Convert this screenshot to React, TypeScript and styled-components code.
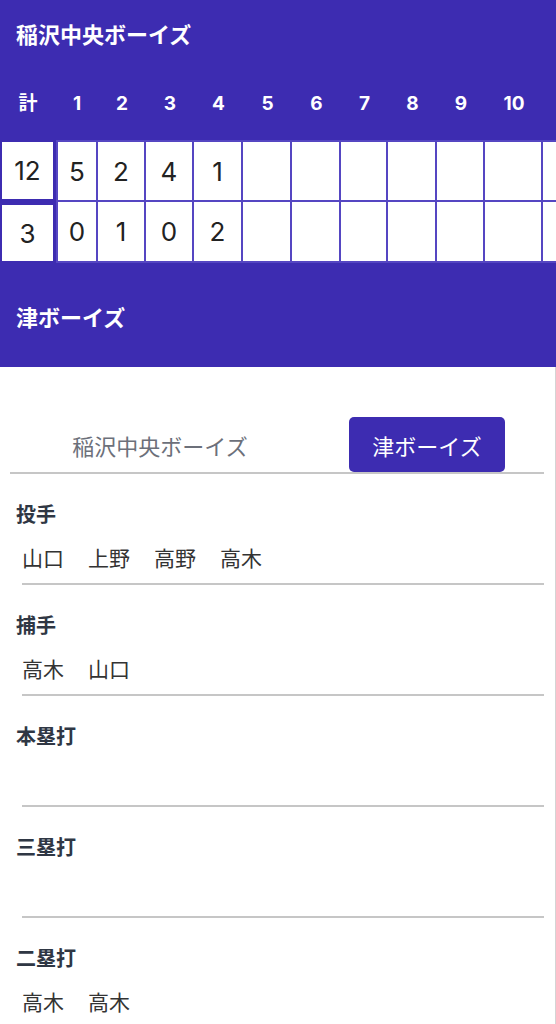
import * as React from 'react'
import styled, { createGlobalStyle } from 'styled-components'

const Purple = '#3d2cb1'
const LineColor = '#5546c2'
const JpFont = `Inter, "Noto Sans CJK JP", sans-serif`

const GlobalStyle = createGlobalStyle`
  html, body {
    margin: 0;
    padding: 0;
    background: #fff;
  }
  body {
    font-family: ${JpFont};
  }
`

const Page = styled.div`
  width: 556px;
  min-height: 1024px;
  overflow: hidden;
`

const Header = styled.header`
  background: ${Purple};
  padding: 18px 0 36px;
  color: #fff;
`

const TeamName = styled.div<{ spaced?: boolean }>`
  padding: 0 16px;
  margin-top: ${p => (p.spaced ? 38 : 0)}px;
  font-family: "Noto Sans CJK JP", sans-serif;
  font-weight: 700;
  font-size: 22px;
  line-height: 30px;
`

const BoardWrap = styled.div`
  margin-top: 36px;
  overflow: hidden;
`

const Board = styled.div<{ columns: string }>`
  display: grid;
  grid-template-columns: ${p => p.columns};
  grid-template-rows: 56px 62px 61px;
  width: max-content;
`

const HeadCell = styled.div`
  height: 56px;
  line-height: 40px;
  text-align: center;
  font-family: Inter, "Noto Sans CJK JP", sans-serif;
  font-weight: 700;
  font-size: 19px;
  color: #fff;
`

const TotalCell = styled.div<{ first?: boolean }>`
  margin: ${p => (p.first ? '2px 3px 3px 2px' : '3px 3px 2px 2px')};
  background: #fff;
  display: flex;
  align-items: center;
  justify-content: center;
  font-size: 26px;
  color: #222;
`

const InningCell = styled.div<{ first?: boolean; top?: boolean }>`
  background: #fff;
  border-right: 2px solid ${LineColor};
  border-bottom: 2px solid ${LineColor};
  border-left: ${p => (p.first ? `2px solid ${LineColor}` : 'none')};
  border-top: ${p => (p.top ? `2px solid ${LineColor}` : 'none')};
  display: flex;
  align-items: center;
  justify-content: center;
  font-size: 26px;
  color: #222;
`

const Body = styled.main`
  border-right: 1px solid #d4d4d4;
  padding: 50px 11px 0 10px;
`

const Tabs = styled.div`
  display: flex;
  justify-content: space-around;
  border-bottom: 2px solid #c6c6c6;
`

const Tab = styled.button<{ active?: boolean }>`
  border: none;
  border-radius: 5px;
  padding: 0 23px;
  height: 55px;
  font-family: "Noto Sans CJK JP", sans-serif;
  font-size: 22px;
  background: ${p => (p.active ? Purple : 'transparent')};
  color: ${p => (p.active ? '#fff' : '#6c707a')};
  cursor: pointer;
`

const Section = styled.section`
  padding-top: 28px;
`

const Label = styled.h3`
  margin: 0;
  padding-left: 6px;
  font-family: "Noto Sans CJK JP", sans-serif;
  font-weight: 700;
  font-size: 20px;
  line-height: 24px;
  color: #2f3744;
`

const Names = styled.div`
  display: flex;
  gap: 24px;
  margin: 15px 0 10px;
  padding-left: 12px;
  height: 32px;
  align-items: center;
  font-family: "Noto Sans CJK JP", sans-serif;
  font-size: 21px;
  color: #333;
`

const Divider = styled.hr`
  margin: 0 0 0 12px;
  border: none;
  border-top: 2px solid #c6c6c6;
`

// column widths, the 11th column runs off the right edge
const innings = [42, 48, 48, 49, 49, 49, 47, 49, 48, 58, 58]
const shownInnings = 10
const teamScores = [
  { total: 12, runs: [5, 2, 4, 1] },
  { total: 3, runs: [0, 1, 0, 2] },
]

const records = [
  { title: '投手', names: ['山口', '上野', '高野', '高木'] },
  { title: '捕手', names: ['高木', '山口'] },
  { title: '本塁打', names: [] },
  { title: '三塁打', names: [] },
  { title: '二塁打', names: ['高木', '高木'] },
]

const App: React.FC = () => {
  const columns = ['56px', ...innings.map(w => `${w}px`)].join(' ')

  return (
    <Page>
      <GlobalStyle />
      <Header>
        <TeamName>稲沢中央ボーイズ</TeamName>
        <BoardWrap>
          <Board columns={columns}>
            <HeadCell>計</HeadCell>
            {innings.map((_, i) => (
              <HeadCell key={`h-${i}`}>{i < shownInnings ? i + 1 : ''}</HeadCell>
            ))}
            {teamScores.map((team, row) => (
              <React.Fragment key={`row-${row}`}>
                <TotalCell first={row === 0}>{team.total}</TotalCell>
                {innings.map((_, i) => (
                  <InningCell key={`c-${row}-${i}`} first={i === 0} top={row === 0}>
                    {team.runs[i] ?? ''}
                  </InningCell>
                ))}
              </React.Fragment>
            ))}
          </Board>
        </BoardWrap>
        <TeamName spaced>津ボーイズ</TeamName>
      </Header>

      <Body>
        <Tabs>
          <Tab>稲沢中央ボーイズ</Tab>
          <Tab active>津ボーイズ</Tab>
        </Tabs>
        {records.map(rec => (
          <Section key={rec.title}>
            <Label>{rec.title}</Label>
            <Names>
              {rec.names.map((n, i) => (
                <span key={`${n}-${i}`}>{n}</span>
              ))}
            </Names>
            <Divider />
          </Section>
        ))}
      </Body>
    </Page>
  )
}

export default App
